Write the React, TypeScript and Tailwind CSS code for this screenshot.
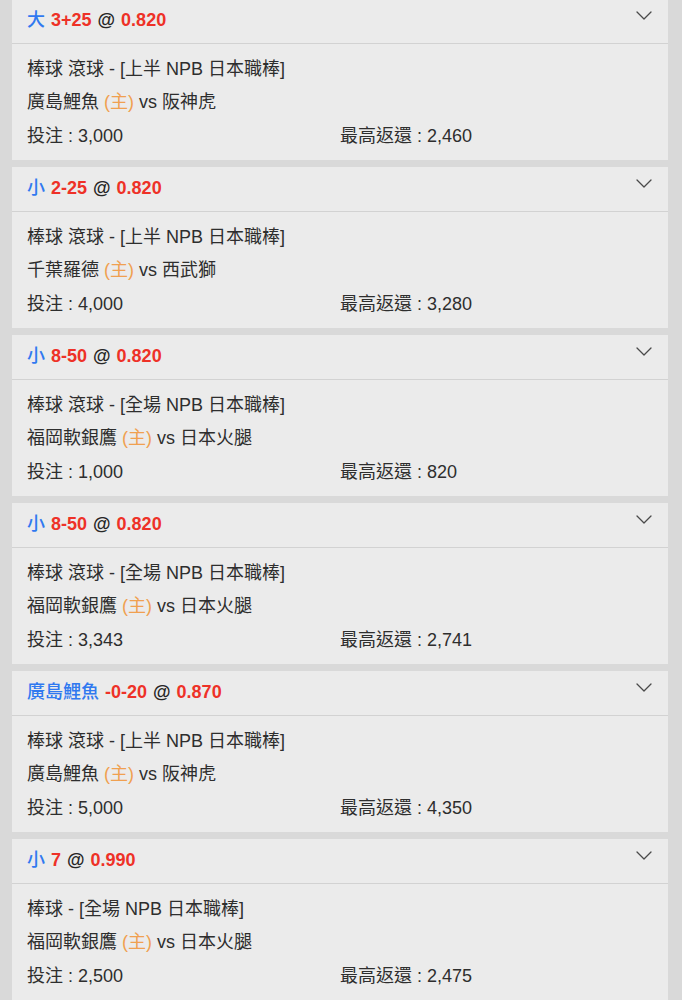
import React from "react";

type Bet = {
  pick: string;
  line: string;
  odds: string;
  league: string;
  home: string;
  away: string;
  stake: string;
  ret: string;
};

const bets: Bet[] = [
  { pick: "大", line: "3+25", odds: "0.820", league: "棒球 滾球 - [上半 NPB 日本職棒]", home: "廣島鯉魚", away: "阪神虎", stake: "3,000", ret: "2,460" },
  { pick: "小", line: "2-25", odds: "0.820", league: "棒球 滾球 - [上半 NPB 日本職棒]", home: "千葉羅德", away: "西武獅", stake: "4,000", ret: "3,280" },
  { pick: "小", line: "8-50", odds: "0.820", league: "棒球 滾球 - [全場 NPB 日本職棒]", home: "福岡軟銀鷹", away: "日本火腿", stake: "1,000", ret: "820" },
  { pick: "小", line: "8-50", odds: "0.820", league: "棒球 滾球 - [全場 NPB 日本職棒]", home: "福岡軟銀鷹", away: "日本火腿", stake: "3,343", ret: "2,741" },
  { pick: "廣島鯉魚", line: "-0-20", odds: "0.870", league: "棒球 滾球 - [上半 NPB 日本職棒]", home: "廣島鯉魚", away: "阪神虎", stake: "5,000", ret: "4,350" },
  { pick: "小", line: "7", odds: "0.990", league: "棒球 - [全場 NPB 日本職棒]", home: "福岡軟銀鷹", away: "日本火腿", stake: "2,500", ret: "2,475" },
];

function Chevron() {
  return (
    <svg width="16" height="9" viewBox="0 0 16 9" fill="none">
      <polyline points="1,1 8,8 15,1" stroke="#4a4a4a" strokeWidth="1.3" strokeLinejoin="round" strokeLinecap="round" />
    </svg>
  );
}

function Card({ b }: { b: Bet }) {
  return (
    <div className="bg-[#ebebeb] mb-[7px]">
      <div className="h-[45px] flex items-center justify-between pl-[15px] pr-[16px] border-b border-[#d2d2d2]">
        <div className="flex items-center gap-[6px] text-[18px] leading-none -mt-[2px]">
          <span className="text-[#3079f0] font-medium">{b.pick}</span>
          <span className="text-[#ee3127] font-bold">{b.line}</span>
          <span className="text-[#262626] font-bold">@</span>
          <span className="text-[#ee3127] font-bold">{b.odds}</span>
        </div>
        <div className="-mt-[12px]">
          <Chevron />
        </div>
      </div>
      <div className="px-[15px] pt-[8.5px] pb-[7px] text-[18px] text-[#2e2e2e]">
        <div className="h-[33.5px] flex items-center">{b.league}</div>
        <div className="h-[33.5px] flex items-center whitespace-pre">
          {b.home} <span className="text-[#f0a050]">(主)</span> vs {b.away}
        </div>
        <div className="h-[33.5px] grid grid-cols-2 items-center">
          <div>投注 : {b.stake}</div>
          <div>最高返還 : {b.ret}</div>
        </div>
      </div>
    </div>
  );
}

export default function App() {
  return (
    <div
      className="min-h-[1000px] bg-[#d9d9d9] pl-[12px] pr-[14px] overflow-hidden"
      style={{ fontFamily: '"Liberation Sans", "Noto Sans CJK TC", sans-serif' }}
    >
      <div className="-mt-px">
        {bets.map((b, i) => (
          <Card key={i} b={b} />
        ))}
      </div>
    </div>
  );
}
